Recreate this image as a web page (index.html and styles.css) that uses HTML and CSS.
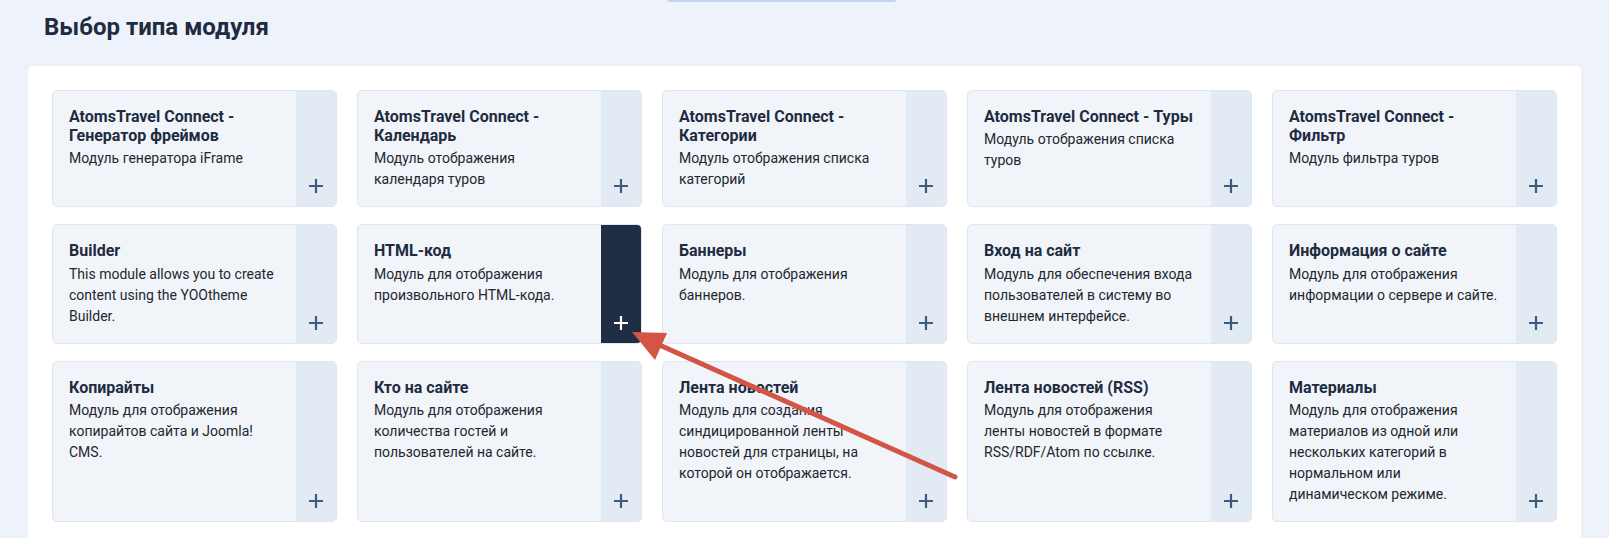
FILE: index.html
```html
<!DOCTYPE html>
<html>
	<head>
		<meta charset="UTF-8">
		<title>Выбор типа модуля</title>
		<link rel="stylesheet" href="styles.css">
	</head>
	<body>
		<div class="topbar"></div>
		<div class="header">
			<h1>Выбор типа модуля</h1>
		</div>
		<div class="panel">
			<div class="grid">
				<a class="card" href="javascript:;">
					<div class="card-body">
						<h3>AtomsTravel Connect - Генератор фреймов</h3>
						<p>Модуль генератора iFrame</p>
					</div>
					<span class="card-add"><svg viewBox="0 0 16 16"><path d="M8 1v14M1 8h14"/></svg></span>
				</a>
				<a class="card" href="javascript:;">
					<div class="card-body">
						<h3>AtomsTravel Connect - Календарь</h3>
						<p>Модуль отображения календаря туров</p>
					</div>
					<span class="card-add"><svg viewBox="0 0 16 16"><path d="M8 1v14M1 8h14"/></svg></span>
				</a>
				<a class="card" href="javascript:;">
					<div class="card-body">
						<h3>AtomsTravel Connect - Категории</h3>
						<p>Модуль отображения списка категорий</p>
					</div>
					<span class="card-add"><svg viewBox="0 0 16 16"><path d="M8 1v14M1 8h14"/></svg></span>
				</a>
				<a class="card" href="javascript:;">
					<div class="card-body">
						<h3>AtomsTravel Connect - Туры</h3>
						<p>Модуль отображения списка туров</p>
					</div>
					<span class="card-add"><svg viewBox="0 0 16 16"><path d="M8 1v14M1 8h14"/></svg></span>
				</a>
				<a class="card" href="javascript:;">
					<div class="card-body">
						<h3>AtomsTravel Connect - Фильтр</h3>
						<p>Модуль фильтра туров</p>
					</div>
					<span class="card-add"><svg viewBox="0 0 16 16"><path d="M8 1v14M1 8h14"/></svg></span>
				</a>

				<a class="card" href="javascript:;">
					<div class="card-body">
						<h3>Builder</h3>
						<p>This module allows you to create content using the YOOtheme Builder.</p>
					</div>
					<span class="card-add"><svg viewBox="0 0 16 16"><path d="M8 1v14M1 8h14"/></svg></span>
				</a>
				<a class="card active" href="javascript:;">
					<div class="card-body">
						<h3>HTML-код</h3>
						<p>Модуль для отображения произвольного HTML-кода.</p>
					</div>
					<span class="card-add"><svg viewBox="0 0 16 16"><path d="M8 1v14M1 8h14"/></svg></span>
				</a>
				<a class="card" href="javascript:;">
					<div class="card-body">
						<h3>Баннеры</h3>
						<p>Модуль для отображения баннеров.</p>
					</div>
					<span class="card-add"><svg viewBox="0 0 16 16"><path d="M8 1v14M1 8h14"/></svg></span>
				</a>
				<a class="card" href="javascript:;">
					<div class="card-body">
						<h3>Вход на сайт</h3>
						<p>Модуль для обеспечения входа пользователей в систему во внешнем интерфейсе.</p>
					</div>
					<span class="card-add"><svg viewBox="0 0 16 16"><path d="M8 1v14M1 8h14"/></svg></span>
				</a>
				<a class="card" href="javascript:;">
					<div class="card-body">
						<h3>Информация о сайте</h3>
						<p>Модуль для отображения информации о сервере и сайте.</p>
					</div>
					<span class="card-add"><svg viewBox="0 0 16 16"><path d="M8 1v14M1 8h14"/></svg></span>
				</a>

				<a class="card" href="javascript:;">
					<div class="card-body">
						<h3>Копирайты</h3>
						<p>Модуль для отображения копирайтов сайта и Joomla! CMS.</p>
					</div>
					<span class="card-add"><svg viewBox="0 0 16 16"><path d="M8 1v14M1 8h14"/></svg></span>
				</a>
				<a class="card" href="javascript:;">
					<div class="card-body">
						<h3>Кто на сайте</h3>
						<p>Модуль для отображения количества гостей и пользователей на сайте.</p>
					</div>
					<span class="card-add"><svg viewBox="0 0 16 16"><path d="M8 1v14M1 8h14"/></svg></span>
				</a>
				<a class="card" href="javascript:;">
					<div class="card-body">
						<h3>Лента новостей</h3>
						<p>Модуль для создания синдицированной ленты новостей для страницы, на которой он отображается.</p>
					</div>
					<span class="card-add"><svg viewBox="0 0 16 16"><path d="M8 1v14M1 8h14"/></svg></span>
				</a>
				<a class="card" href="javascript:;">
					<div class="card-body">
						<h3>Лента новостей (RSS)</h3>
						<p>Модуль для отображения ленты новостей в формате RSS/RDF/Atom по ссылке.</p>
					</div>
					<span class="card-add"><svg viewBox="0 0 16 16"><path d="M8 1v14M1 8h14"/></svg></span>
				</a>
				<a class="card" href="javascript:;">
					<div class="card-body">
						<h3>Материалы</h3>
						<p>Модуль для отображения материалов из одной или нескольких категорий в нормальном или динамическом режиме.</p>
					</div>
					<span class="card-add"><svg viewBox="0 0 16 16"><path d="M8 1v14M1 8h14"/></svg></span>
				</a>
			</div>
		</div>

		<!-- annotation arrow drawn over the page -->
		<svg class="arrow" viewBox="0 0 1609 538">
			<line x1="955" y1="477" x2="655" y2="343"/>
			<polygon points="632,332 667,333 655,360"/>
		</svg>
	</body>
</html>
```

FILE: styles.css
```css
* {margin:0; padding:0; box-sizing:border-box;}
body {background:#eef3fb; font-family:Roboto, "Liberation Sans", sans-serif; color:#22272e; position:relative; overflow:hidden;}
a {text-decoration:none; color:inherit;}

.topbar {width:229px; height:2px; margin-left:667px; background:#c3d4ee; border-radius:0 0 3px 3px;}
.header {padding:11px 0 25px 44px;}
.header h1 {font-size:24px; line-height:28px; font-weight:700; color:#1e2b40;}

.panel {margin:0 28px; background:#fff; border-radius:5px; padding:24px;}
.grid {display:grid; grid-template-columns:repeat(5, 1fr); column-gap:20px; row-gap:17px;}

.card {display:flex; background:#f1f5fa; border:1px solid #dfe6ef; border-radius:5px; overflow:hidden;}
.card-body {flex:1; padding:16px 16px 16px 16px;}
.card-body h3 {font-size:16px; line-height:19.2px; font-weight:700; color:#1e2b40; margin-bottom:3px;}
.card-body p {font-size:14px; line-height:21px;}

.card-add {width:40px; flex:none; background:#e2eaf4; display:flex; flex-direction:column; justify-content:flex-end; align-items:center; padding-bottom:12px;}
.card-add svg {width:16px; height:16px; fill:none; stroke:#3d5a80; stroke-width:2.2;}
.card.active .card-add {background:#1f2d45;}
.card.active .card-add svg {stroke:#fff;}

.arrow {position:absolute; left:0; top:0; width:1609px; height:538px; pointer-events:none;}
.arrow line {stroke:#d35545; stroke-width:5; stroke-linecap:round;}
.arrow polygon {fill:#d35545;}
```
